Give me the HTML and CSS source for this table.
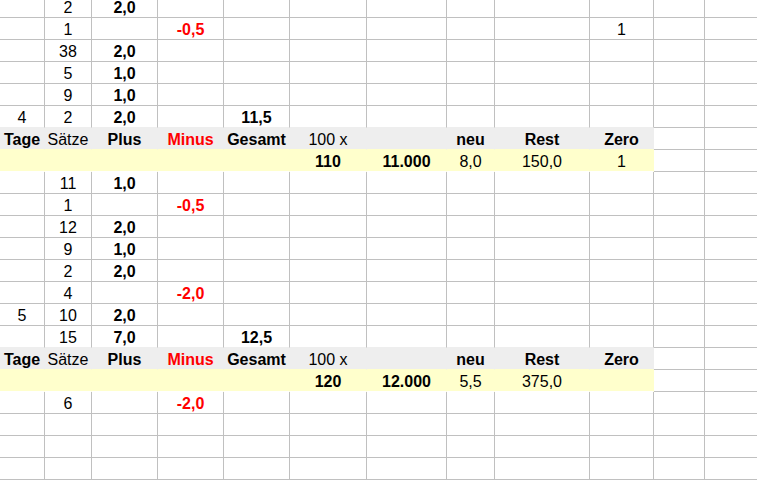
FILE: index.html
```html
<!DOCTYPE html>
<html lang="de">
<head>
<meta charset="utf-8">
<title>Tabelle</title>
<link rel="stylesheet" href="styles.css">
</head>
<body>
<div class="sheet">
  <div class="row"><div></div><div>2</div><div class="b">2,0</div><div></div><div></div><div></div><div></div><div></div><div></div><div></div><div></div><div></div></div>
  <div class="row"><div></div><div>1</div><div></div><div class="b r">-0,5</div><div></div><div></div><div></div><div></div><div></div><div>1</div><div></div><div></div></div>
  <div class="row"><div></div><div>38</div><div class="b">2,0</div><div></div><div></div><div></div><div></div><div></div><div></div><div></div><div></div><div></div></div>
  <div class="row"><div></div><div>5</div><div class="b">1,0</div><div></div><div></div><div></div><div></div><div></div><div></div><div></div><div></div><div></div></div>
  <div class="row"><div></div><div>9</div><div class="b">1,0</div><div></div><div></div><div></div><div></div><div></div><div></div><div></div><div></div><div></div></div>
  <div class="row pre"><div>4</div><div>2</div><div class="b">2,0</div><div></div><div class="b">11,5</div><div></div><div></div><div></div><div></div><div></div><div></div><div></div></div>
  <div class="row hd"><div class="b">Tage</div><div>Sätze</div><div class="b">Plus</div><div class="b r">Minus</div><div class="b">Gesamt</div><div>100 x</div><div></div><div class="b">neu</div><div class="b">Rest</div><div class="b">Zero</div><div></div><div></div></div>
  <div class="row yl"><div></div><div></div><div></div><div></div><div></div><div class="b">110</div><div class="b">11.000</div><div>8,0</div><div>150,0</div><div>1</div><div></div><div></div></div>
  <div class="row"><div></div><div>11</div><div class="b">1,0</div><div></div><div></div><div></div><div></div><div></div><div></div><div></div><div></div><div></div></div>
  <div class="row"><div></div><div>1</div><div></div><div class="b r">-0,5</div><div></div><div></div><div></div><div></div><div></div><div></div><div></div><div></div></div>
  <div class="row"><div></div><div>12</div><div class="b">2,0</div><div></div><div></div><div></div><div></div><div></div><div></div><div></div><div></div><div></div></div>
  <div class="row"><div></div><div>9</div><div class="b">1,0</div><div></div><div></div><div></div><div></div><div></div><div></div><div></div><div></div><div></div></div>
  <div class="row"><div></div><div>2</div><div class="b">2,0</div><div></div><div></div><div></div><div></div><div></div><div></div><div></div><div></div><div></div></div>
  <div class="row"><div></div><div>4</div><div></div><div class="b r">-2,0</div><div></div><div></div><div></div><div></div><div></div><div></div><div></div><div></div></div>
  <div class="row"><div>5</div><div>10</div><div class="b">2,0</div><div></div><div></div><div></div><div></div><div></div><div></div><div></div><div></div><div></div></div>
  <div class="row pre"><div></div><div>15</div><div class="b">7,0</div><div></div><div class="b">12,5</div><div></div><div></div><div></div><div></div><div></div><div></div><div></div></div>
  <div class="row hd"><div class="b">Tage</div><div>Sätze</div><div class="b">Plus</div><div class="b r">Minus</div><div class="b">Gesamt</div><div>100 x</div><div></div><div class="b">neu</div><div class="b">Rest</div><div class="b">Zero</div><div></div><div></div></div>
  <div class="row yl"><div></div><div></div><div></div><div></div><div></div><div class="b">120</div><div class="b">12.000</div><div>5,5</div><div>375,0</div><div></div><div></div><div></div></div>
  <div class="row"><div></div><div>6</div><div></div><div class="b r">-2,0</div><div></div><div></div><div></div><div></div><div></div><div></div><div></div><div></div></div>
  <div class="row"><div></div><div></div><div></div><div></div><div></div><div></div><div></div><div></div><div></div><div></div><div></div><div></div></div>
  <div class="row"><div></div><div></div><div></div><div></div><div></div><div></div><div></div><div></div><div></div><div></div><div></div><div></div></div>
  <div class="row"><div></div><div></div><div></div><div></div><div></div><div></div><div></div><div></div><div></div><div></div><div></div><div></div></div>
</div>
</body>
</html>
```

FILE: styles.css
```css
html, body {
  margin: 0;
  padding: 0;
  background: #ffffff;
  overflow: hidden;
}

.sheet {
  margin-top: -4px;
  font-family: "Liberation Sans", Arial, sans-serif;
  font-size: 16px;
  color: #000000;
}

.row {
  display: grid;
  grid-template-columns: 45px 47px 66px 66px 66px 77px 80px 48px 95px 64px 51px 1fr;
  height: 22px;
}

.row > div {
  box-sizing: border-box;
  height: 22px;
  border-right: 1px solid #c0c0c0;
  border-bottom: 1px solid #c0c0c0;
  padding-top: 3px;
  line-height: 18px;
  text-align: center;
  white-space: nowrap;
  overflow: hidden;
}

.row > div:last-child {
  border-right: none;
}

.b {
  font-weight: bold;
}

.r {
  color: #ff0000;
}

.pre > div:nth-child(-n+10) {
  border-bottom-color: #eeeeee;
}

.hd > div:nth-child(-n+10) {
  background: #eeeeee;
  border-right-color: #eeeeee;
  border-bottom-color: #ffffcc;
}

.yl > div:nth-child(-n+10) {
  background: #ffffcc;
  border-right-color: #ffffcc;
  border-bottom-color: #ffffff;
}
```
